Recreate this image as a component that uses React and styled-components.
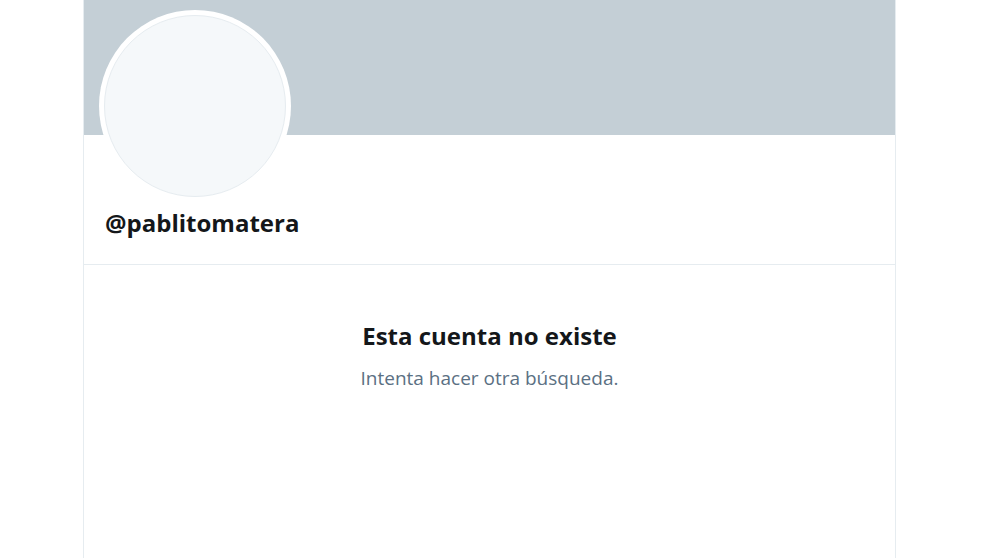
import React from 'react'
import styled, { createGlobalStyle } from 'styled-components'

const GlobalStyle = createGlobalStyle`
  body {
    margin: 0;
    background-color: #ffffff;
    font-family: 'Open Sans', 'Noto Sans', sans-serif;
  }
`

const Page = styled.div`
  display: flex;
  padding-left: 83px;
  min-height: 558px;
`
const Column = styled.main`
  width: 811px;
  border-left: 1px solid #e6ecf0;
  border-right: 1px solid #e6ecf0;
  display: flex;
  flex-direction: column;
`
const Banner = styled.div`
  height: 135px;
  background-color: #c4cfd6;
`
const ProfileHeader = styled.div`
  display: flex;
  flex-direction: column;
  padding: 0 15px;
  border-bottom: 1px solid #e6ecf0;
  height: 129px;
`
const AvatarRing = styled.div`
  width: 192px;
  height: 192px;
  margin-top: -125px;
  border-radius: 50%;
  background-color: #ffffff;
  display: flex;
  align-items: center;
  justify-content: center;
`
const Avatar = styled.div`
  width: 180px;
  height: 180px;
  border-radius: 50%;
  background-color: #f5f8fa;
  border: 1px solid #e6ecf0;
`
const Handle = styled.h2`
  margin: 7px 0 0 6px;
  font-size: 24px;
  line-height: 28px;
  font-weight: 700;
  color: #14171a;
`
const EmptyState = styled.section`
  display: flex;
  flex-direction: column;
  align-items: center;
  padding-top: 55px;
`
const Title = styled.h3`
  margin: 0;
  font-size: 24px;
  line-height: 32px;
  font-weight: 700;
  color: #14171a;
`
const Subtitle = styled.p`
  margin: 14px 0 0;
  font-size: 19px;
  line-height: 24px;
  color: #5b7083;
`

export default function App() {
  return (
    <>
      <GlobalStyle />
      <Page>
        <Column>
          <Banner />
          <ProfileHeader>
            <AvatarRing>
              <Avatar />
            </AvatarRing>
            <Handle>@pablitomatera</Handle>
          </ProfileHeader>
          <EmptyState>
            <Title>Esta cuenta no existe</Title>
            <Subtitle>Intenta hacer otra búsqueda.</Subtitle>
          </EmptyState>
        </Column>
      </Page>
    </>
  )
}
